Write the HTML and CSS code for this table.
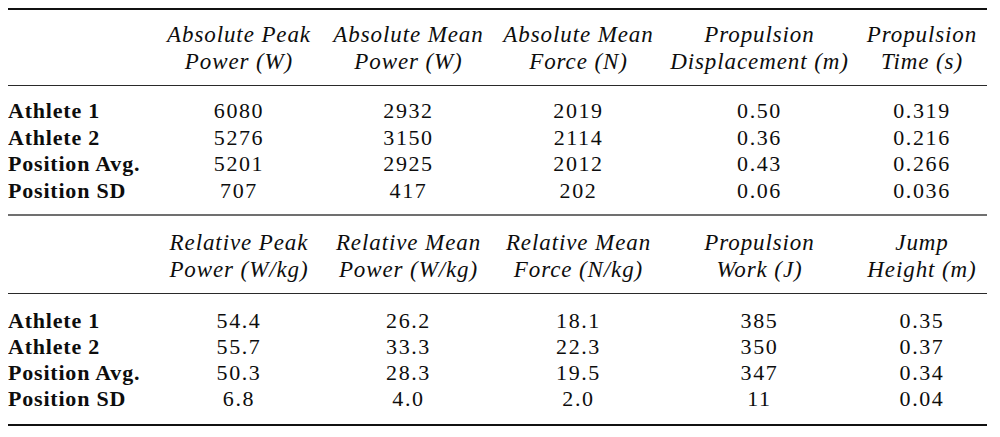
FILE: index.html
```html
<!DOCTYPE html>
<html>
<head>
<meta charset="utf-8">
<link rel="stylesheet" href="styles.css">
</head>
<body>
<table class="stats">
  <colgroup>
    <col class="c-label">
    <col class="c1">
    <col class="c2">
    <col class="c3">
    <col class="c4">
    <col class="c5">
  </colgroup>
  <thead>
    <tr class="head head-top">
      <th class="lab-head"></th>
      <th>Absolute Peak<br>Power (W)</th>
      <th>Absolute Mean<br>Power (W)</th>
      <th>Absolute Mean<br>Force (N)</th>
      <th>Propulsion<br>Displacement (m)</th>
      <th>Propulsion<br>Time (s)</th>
    </tr>
  </thead>
  <tbody class="data data-a">
    <tr class="first"><td class="lab">Athlete 1</td><td>6080</td><td>2932</td><td>2019</td><td>0.50</td><td>0.319</td></tr>
    <tr><td class="lab">Athlete 2</td><td>5276</td><td>3150</td><td>2114</td><td>0.36</td><td>0.216</td></tr>
    <tr><td class="lab">Position Avg.</td><td>5201</td><td>2925</td><td>2012</td><td>0.43</td><td>0.266</td></tr>
    <tr class="last"><td class="lab">Position SD</td><td>707</td><td>417</td><td>202</td><td>0.06</td><td>0.036</td></tr>
  </tbody>
  <tbody class="second">
    <tr class="head head-mid">
      <th class="lab-head"></th>
      <th>Relative Peak<br>Power (W/kg)</th>
      <th>Relative Mean<br>Power (W/kg)</th>
      <th>Relative Mean<br>Force (N/kg)</th>
      <th>Propulsion<br>Work (J)</th>
      <th>Jump<br>Height (m)</th>
    </tr>
  </tbody>
  <tbody class="data data-b">
    <tr class="first"><td class="lab">Athlete 1</td><td>54.4</td><td>26.2</td><td>18.1</td><td>385</td><td>0.35</td></tr>
    <tr><td class="lab">Athlete 2</td><td>55.7</td><td>33.3</td><td>22.3</td><td>350</td><td>0.37</td></tr>
    <tr><td class="lab">Position Avg.</td><td>50.3</td><td>28.3</td><td>19.5</td><td>347</td><td>0.34</td></tr>
    <tr class="last"><td class="lab">Position SD</td><td>6.8</td><td>4.0</td><td>2.0</td><td>11</td><td>0.04</td></tr>
  </tbody>
</table>
</body>
</html>
```
FILE: styles.css
```css
html, body {
  background: #ffffff;
}
body {
  margin: 8px;
  font-family: "Liberation Serif", "Times New Roman", serif;
  color: #0d0d0d;
}
.stats {
  width: 979px;
  table-layout: fixed;
  border-collapse: separate;
  border-spacing: 0;
  font-size: 22px;
}
.c-label { width: 148px; }
.c1 { width: 166px; }
.c2 { width: 173px; }
.c3 { width: 167px; }
.c4 { width: 195px; }
.c5 { width: 130px; }

.stats th,
.stats td {
  padding-left: 0;
  padding-right: 0;
  text-align: center;
  vertical-align: baseline;
  white-space: nowrap;
}
.head th {
  font-style: italic;
  font-weight: normal;
  font-size: 23px;
  line-height: 26.5px;
  letter-spacing: 0.9px;
  border-bottom: 1px solid #2a2a2a;
  padding-bottom: 10px;
}
.head-top th {
  border-top: 2px solid #111;
  padding-top: 12px;
}
.head-mid th {
  border-top: 2px solid #707070;
  padding-top: 14px;
}
.data td {
  line-height: 26.5px;
  letter-spacing: 1.6px;
  padding-top: 0;
  padding-bottom: 0;
}
.data-b td {
  line-height: 26px;
}
.data .lab {
  text-align: left;
  font-weight: bold;
  letter-spacing: 0.8px;
}
.data-a .first td { padding-top: 12px; }
.data-a .last td { padding-bottom: 10px; }
.data-b .first td { padding-top: 14px; }
.data-b .last td {
  padding-bottom: 12px;
  border-bottom: 2px solid #111;
}
```
